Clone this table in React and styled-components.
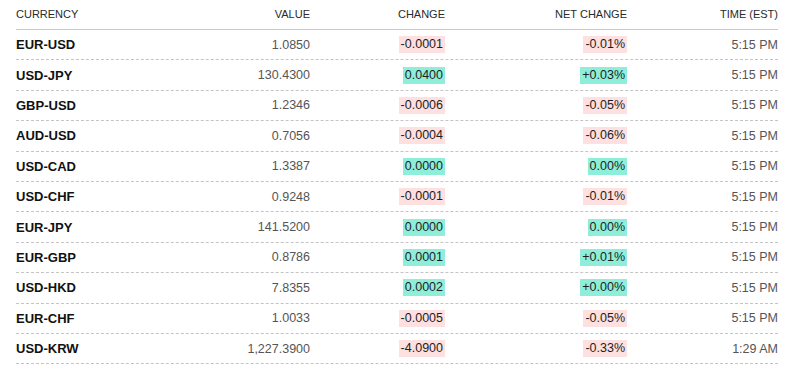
import React from "react";
import styled, { createGlobalStyle } from "styled-components";

const GlobalStyle = createGlobalStyle`
  body {
    margin: 0;
    background: #ffffff;
    font-family: "Liberation Sans", Arial, sans-serif;
  }
`;

const Table = styled.div`
  padding: 0 22px 0 16px;
  width: 762px;
`;

const Row = styled.div`
  display: grid;
  grid-template-columns: 150px 144px 135px 182px 151px;
  align-items: center;
  box-sizing: border-box;
  height: ${(p) => (p.$head ? "30px" : "30.4px")};
  border-bottom: 1px ${(p) => (p.$head ? "solid #c8c8c8" : "dashed #c4c4c4")};
`;

const HeadCell = styled.div`
  font-size: 11px;
  color: #2a2a2a;
  text-transform: uppercase;
  text-align: ${(p) => (p.$left ? "left" : "right")};
  padding-bottom: 1px;
`;

const Pair = styled.div`
  font-size: 13px;
  font-weight: 700;
  color: #111;
`;

const Cell = styled.div`
  font-size: 12.5px;
  color: #555;
  text-align: right;
`;

const Badge = styled.span`
  display: inline-block;
  font-size: 12.5px;
  line-height: 17px;
  padding: 0 2px;
  color: #1e1e1e;
  background: ${(p) => (p.$up ? "#8eeed9" : "#fde0df")};
`;

const rows = [
  ["EUR-USD", "1.0850", "-0.0001", "-0.01%", "5:15 PM"],
  ["USD-JPY", "130.4300", "0.0400", "+0.03%", "5:15 PM"],
  ["GBP-USD", "1.2346", "-0.0006", "-0.05%", "5:15 PM"],
  ["AUD-USD", "0.7056", "-0.0004", "-0.06%", "5:15 PM"],
  ["USD-CAD", "1.3387", "0.0000", "0.00%", "5:15 PM"],
  ["USD-CHF", "0.9248", "-0.0001", "-0.01%", "5:15 PM"],
  ["EUR-JPY", "141.5200", "0.0000", "0.00%", "5:15 PM"],
  ["EUR-GBP", "0.8786", "0.0001", "+0.01%", "5:15 PM"],
  ["USD-HKD", "7.8355", "0.0002", "+0.00%", "5:15 PM"],
  ["EUR-CHF", "1.0033", "-0.0005", "-0.05%", "5:15 PM"],
  ["USD-KRW", "1,227.3900", "-4.0900", "-0.33%", "1:29 AM"],
];

const App = () => {
  return (
    <>
      <GlobalStyle />
      <Table>
        <Row $head>
          <HeadCell $left>Currency</HeadCell>
          <HeadCell>Value</HeadCell>
          <HeadCell>Change</HeadCell>
          <HeadCell>Net Change</HeadCell>
          <HeadCell>Time (EST)</HeadCell>
        </Row>
        {rows.map(([pair, value, change, net, time]) => {
          const up = !change.startsWith("-");
          return (
            <Row key={pair}>
              <Pair>{pair}</Pair>
              <Cell>{value}</Cell>
              <Cell>
                <Badge $up={up}>{change}</Badge>
              </Cell>
              <Cell>
                <Badge $up={up}>{net}</Badge>
              </Cell>
              <Cell>{time}</Cell>
            </Row>
          );
        })}
      </Table>
    </>
  );
};

export default App;
